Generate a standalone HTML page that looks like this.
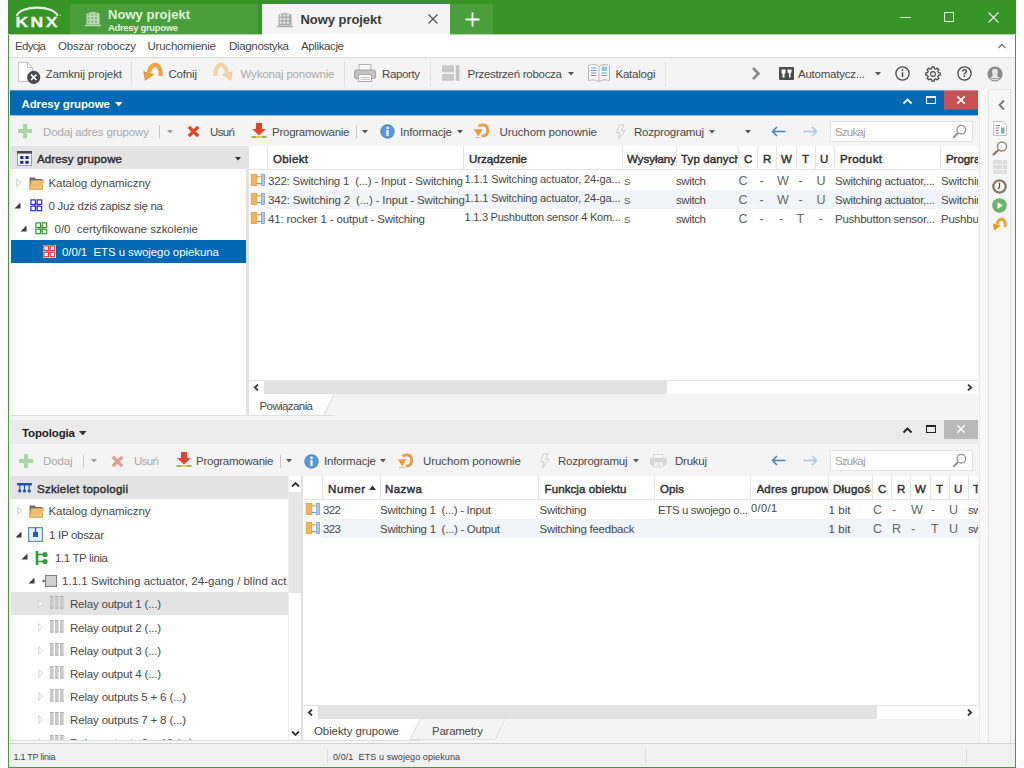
<!DOCTYPE html>
<html lang="pl"><head><meta charset="utf-8"><title>ETS5 - Nowy projekt</title>
<style>
html,body{margin:0;padding:0;}
body{width:1024px;height:768px;overflow:hidden;background:#fff;position:relative;font-family:"Liberation Sans",sans-serif;}
#app{position:absolute;left:0;top:0;width:1024px;height:768px;overflow:hidden;}
#app div,#app svg,#app span.t{position:absolute;}
#app span.t{white-space:pre;}
</style></head><body><div id="app">
<div style="left:8px;top:0px;width:1008px;height:768px;background:#f4f4f4;"></div>
<div style="left:8px;top:0px;width:1px;height:768px;background:#4a963d;"></div>
<div style="left:1015px;top:0px;width:1px;height:768px;background:#4a963d;"></div>
<div style="left:8px;top:767px;width:1008px;height:1px;background:#4a963d;"></div>
<div style="left:8px;top:0px;width:1008px;height:34px;background:#379426;"></div>
<div style="left:70px;top:4px;width:188px;height:30px;background:#4b9e3c;"></div>
<div style="left:262px;top:4px;width:188px;height:30px;background:#f4f4f4;"></div>
<div style="left:450px;top:4px;width:43px;height:30px;background:#4b9e3c;"></div>
<svg style="left:13px;top:4px;" width="52" height="26" viewBox="0 0 52 26"><path d="M3.8 11.8 C7 0.9 41 0.9 44.6 11.8" fill="none" stroke="#e4f6e0" stroke-width="2.1"/><text transform="translate(2.4 22.9) scale(1.17 1)" style="letter-spacing:2.1px" font-family="Liberation Sans,sans-serif" font-weight="700" font-size="15" fill="#effaec" stroke="#effaec" stroke-width="0.35">KNX</text><circle cx="47.3" cy="11" r="0.8" fill="#bfe3b8"/></svg>
<svg style="left:84.5px;top:11px;" width="16" height="16" viewBox="0 0 16 16"><g opacity="0.75"><path d="M1.5 2.5 Q8 -0.5 14.5 2.5 V13.5 H1.5Z" fill="#dff5da"/><rect x="2.6" y="2.4" width="2.2" height="2.2" fill="#000" opacity="0.25"/><rect x="2.6" y="6.0" width="2.2" height="2.2" fill="#000" opacity="0.25"/><rect x="2.6" y="9.6" width="2.2" height="2.2" fill="#000" opacity="0.25"/><rect x="6.2" y="2.4" width="2.2" height="2.2" fill="#000" opacity="0.25"/><rect x="6.2" y="6.0" width="2.2" height="2.2" fill="#000" opacity="0.25"/><rect x="6.2" y="9.6" width="2.2" height="2.2" fill="#000" opacity="0.25"/><rect x="9.8" y="2.4" width="2.2" height="2.2" fill="#000" opacity="0.25"/><rect x="9.8" y="6.0" width="2.2" height="2.2" fill="#000" opacity="0.25"/><rect x="9.8" y="9.6" width="2.2" height="2.2" fill="#000" opacity="0.25"/><path d="M0 14.5H16" stroke="#dff5da" stroke-width="1.4"/></g></svg>
<span class="t" style="left:108px;top:7.0px;font-size:13px;line-height:16px;color:#def6d8;font-weight:700;letter-spacing:0.034px;">Nowy projekt</span>
<span class="t" style="left:108px;top:22.5px;font-size:9.5px;line-height:10px;color:#def6d8;font-weight:700;letter-spacing:-0.341px;">Adresy grupowe</span>
<svg style="left:277px;top:12px;" width="16" height="16" viewBox="0 0 16 16"><g opacity="0.8"><path d="M1.5 2.5 Q8 -0.5 14.5 2.5 V13.5 H1.5Z" fill="#9a9a9a"/><rect x="2.6" y="2.4" width="2.2" height="2.2" fill="#fff" opacity="0.75"/><rect x="2.6" y="6.0" width="2.2" height="2.2" fill="#fff" opacity="0.75"/><rect x="2.6" y="9.6" width="2.2" height="2.2" fill="#fff" opacity="0.75"/><rect x="6.2" y="2.4" width="2.2" height="2.2" fill="#fff" opacity="0.75"/><rect x="6.2" y="6.0" width="2.2" height="2.2" fill="#fff" opacity="0.75"/><rect x="6.2" y="9.6" width="2.2" height="2.2" fill="#fff" opacity="0.75"/><rect x="9.8" y="2.4" width="2.2" height="2.2" fill="#fff" opacity="0.75"/><rect x="9.8" y="6.0" width="2.2" height="2.2" fill="#fff" opacity="0.75"/><rect x="9.8" y="9.6" width="2.2" height="2.2" fill="#fff" opacity="0.75"/><path d="M0 14.5H16" stroke="#9a9a9a" stroke-width="1.4"/></g></svg>
<span class="t" style="left:300.5px;top:11.5px;font-size:13px;line-height:16px;color:#3a3a3a;font-weight:700;letter-spacing:-0.057px;">Nowy projekt</span>
<svg style="left:427px;top:13px;" width="12" height="12" viewBox="0 0 12 12"><path d="M1.5 1.5L10.5 10.5M10.5 1.5L1.5 10.5" stroke="#555" stroke-width="1.3" fill="none"/></svg>
<svg style="left:464px;top:11px;" width="17" height="17" viewBox="0 0 17 17"><path d="M8.5 1.5V15.5M1.5 8.5H15.5" stroke="#fff" stroke-width="1.8" fill="none"/></svg>
<div style="left:900px;top:17px;width:11px;height:1px;background:#d7ecd3;"></div>
<div style="left:944px;top:12px;width:10px;height:10px;border:1px solid #e4f2e1;box-sizing:border-box;"></div>
<svg style="left:988px;top:12px;" width="11" height="11" viewBox="0 0 11 11"><path d="M0.5 0.5L10.5 10.5M10.5 0.5L0.5 10.5" stroke="#e4f2e1" stroke-width="1.1" fill="none"/></svg>
<div style="left:9px;top:34px;width:1006px;height:23px;background:#fff;"></div>
<div style="left:8px;top:34px;width:254px;height:1px;background:#b3d6ac;"></div>
<div style="left:450px;top:34px;width:566px;height:1px;background:#b3d6ac;"></div>
<span class="t" style="left:15px;top:38.0px;font-size:11.5px;line-height:16px;color:#484848;letter-spacing:-0.706px;">Edycja</span>
<span class="t" style="left:58px;top:38.0px;font-size:11.5px;line-height:16px;color:#484848;letter-spacing:-0.195px;">Obszar roboczy</span>
<span class="t" style="left:147.5px;top:38.0px;font-size:11.5px;line-height:16px;color:#484848;letter-spacing:-0.223px;">Uruchomienie</span>
<span class="t" style="left:229px;top:38.0px;font-size:11.5px;line-height:16px;color:#484848;letter-spacing:-0.330px;">Diagnostyka</span>
<span class="t" style="left:301px;top:38.0px;font-size:11.5px;line-height:16px;color:#484848;letter-spacing:-0.379px;">Aplikacje</span>
<svg style="left:997px;top:42px;" width="10" height="8" viewBox="0 0 10 8"><path d="M1.5 6L5 2.5L8.5 6" stroke="#777" stroke-width="1.4" fill="none"/></svg>
<div style="left:9px;top:57px;width:1006px;height:1px;background:#dadada;"></div>
<div style="left:9px;top:58px;width:1006px;height:32px;background:#f4f4f4;"></div>
<div style="left:10px;top:88px;width:968px;height:2px;background:#e6f1f9;"></div>
<svg style="left:16px;top:61px;" width="26" height="25" viewBox="0 0 26 25"><path d="M2.5 1.5H11.5L16.5 6.5V20.5H2.5Z" fill="#fff" stroke="#c4c4c4"/><path d="M11.5 1.5V6.5H16.5" fill="none" stroke="#c4c4c4"/><circle cx="17.7" cy="16.3" r="6.6" fill="#4a4a4a"/><path d="M15 13.6L20.4 19M20.4 13.6L15 19" stroke="#fff" stroke-width="1.7"/></svg>
<span class="t" style="left:45.5px;top:66.0px;font-size:11.5px;line-height:16px;color:#484848;letter-spacing:-0.105px;">Zamknij projekt</span>
<div style="left:131px;top:62px;width:1px;height:25px;background:#e0e0e0;"></div>
<svg style="left:142px;top:62px;" width="21" height="20" viewBox="0 0 21 20"><g opacity="1.0"><path d="M18.3 14 C19.8 6.5 15.5 1.8 11.5 3.3 C8.8 4.4 7.6 7 7 10.5" fill="none" stroke="#f0a23c" stroke-width="4.2"/><path d="M1.3 9.2 L12.2 12.2 L3 18.8 Z" fill="#e08a1c"/><path d="M2.5 10.5 L10 12.5 L3.8 17 Z" fill="#f0a23c"/></g></svg>
<span class="t" style="left:168.5px;top:66.0px;font-size:11.5px;line-height:16px;color:#484848;letter-spacing:-0.181px;">Cofnij</span>
<svg style="left:213px;top:62px;" width="21" height="20" viewBox="0 0 21 20"><g transform="translate(21 0) scale(-1 1)" opacity="0.4"><path d="M18.3 14 C19.8 6.5 15.5 1.8 11.5 3.3 C8.8 4.4 7.6 7 7 10.5" fill="none" stroke="#f0a23c" stroke-width="4.2"/><path d="M1.3 9.2 L12.2 12.2 L3 18.8 Z" fill="#e08a1c"/><path d="M2.5 10.5 L10 12.5 L3.8 17 Z" fill="#f0a23c"/></g></svg>
<span class="t" style="left:240.5px;top:66.0px;font-size:11.5px;line-height:16px;color:#a9a9a9;letter-spacing:-0.163px;">Wykonaj ponownie</span>
<div style="left:344px;top:62px;width:1px;height:25px;background:#e0e0e0;"></div>
<svg style="left:354px;top:63.5px;" width="22" height="18.0" viewBox="0 0 22 18"><g opacity="1.0"><rect x="5" y="0.5" width="12" height="6" fill="#f8f8f8" stroke="#b4b4b4"/><rect x="0.5" y="6" width="21" height="8.5" rx="1.5" fill="#c2c2c2" stroke="#a4a4a4"/><rect x="4.5" y="10.5" width="13" height="7" fill="#fafafa" stroke="#adadad"/><path d="M6.5 13.5H15.5M6.5 15.5H15.5" stroke="#c4c4c4"/></g></svg>
<span class="t" style="left:382px;top:66.0px;font-size:11.5px;line-height:16px;color:#484848;letter-spacing:-0.380px;">Raporty</span>
<div style="left:430px;top:62px;width:1px;height:25px;background:#e0e0e0;"></div>
<svg style="left:442px;top:65px;" width="18" height="16" viewBox="0 0 18 16"><rect x="0" y="0.3" width="12" height="7" fill="#c9c9c9"/><rect x="0" y="9" width="12" height="6.8" fill="#c9c9c9"/><rect x="13.8" y="0.3" width="3.7" height="15.5" fill="#c4c4c4"/></svg>
<span class="t" style="left:467.5px;top:66.0px;font-size:11.5px;line-height:16px;color:#484848;letter-spacing:-0.269px;">Przestrzeń robocza</span>
<svg style="left:567.5px;top:72px;" width="6" height="4.0" viewBox="0 0 6 4.0"><path d="M0 0H6L3.0 3.6Z" fill="#555"/></svg>
<svg style="left:587px;top:62px;" width="24" height="21" viewBox="0 0 24 21"><path d="M1.5 3.5C5 2 9 2 12 4.5C15 2 19 2 22.5 3.5V18.5C19 17.5 15 17.5 12 19.5C9 17.5 5 17.5 1.5 18.5Z" fill="#fbfbfb" stroke="#b5b5b5"/><path d="M12 4.5V19.5" stroke="#b5b5b5"/><path d="M4 6H9.5M4 8.5H9.5M4 11H9.5M4 13.5H9.5M14.5 11H20M14.5 13.5H20" stroke="#4aa3dc" stroke-width="1.2"/><rect x="14.5" y="4.5" width="5.5" height="4.5" fill="#8fc8ee"/></svg>
<span class="t" style="left:615.5px;top:66.0px;font-size:11.5px;line-height:16px;color:#484848;letter-spacing:-0.223px;">Katalogi</span>
<div style="left:665px;top:62px;width:1px;height:25px;background:#e0e0e0;"></div>
<svg style="left:750px;top:66px;" width="11" height="15" viewBox="0 0 11 15"><path d="M3 2L8.5 7.5L3 13" stroke="#8a8a8a" stroke-width="2.6" fill="none"/></svg>
<svg style="left:779px;top:67px;" width="15" height="13" viewBox="0 0 15 13"><rect x="0" y="0" width="15" height="13" rx="1" fill="#4d4d4d"/><path d="M2.5 2.5H6.5V6L5.5 7V10.5H3.5V7L2.5 6Z M8.5 2.5H12.5V5.5L11.5 6.5V10.5H10V6.5L8.5 5.5Z" fill="#fff"/></svg>
<span class="t" style="left:798px;top:66.0px;font-size:11.5px;line-height:16px;color:#484848;letter-spacing:-0.223px;">Automatycz...</span>
<svg style="left:875.0px;top:72px;" width="6" height="4.0" viewBox="0 0 6 4.0"><path d="M0 0H6L3.0 3.6Z" fill="#555"/></svg>
<svg style="left:893.5px;top:65px;" width="17" height="17" viewBox="0 0 17 17"><circle cx="8.5" cy="8.5" r="6.6" fill="none" stroke="#4a4a4a" stroke-width="1.3"/><path d="M8.5 7.3V12.2" stroke="#4a4a4a" stroke-width="1.5"/><circle cx="8.5" cy="5" r="0.95" fill="#4a4a4a"/></svg>
<svg style="left:924px;top:64.5px;" width="18" height="18" viewBox="0 0 18 18"><path d="M14.42 7.61L16.21 7.86L16.21 10.14L14.42 10.39L13.82 11.85L14.91 13.29L13.29 14.91L11.85 13.82L10.39 14.42L10.14 16.21L7.86 16.21L7.61 14.42L6.15 13.82L4.71 14.91L3.09 13.29L4.18 11.85L3.58 10.39L1.79 10.14L1.79 7.86L3.58 7.61L4.18 6.15L3.09 4.71L4.71 3.09L6.15 4.18L7.61 3.58L7.86 1.79L10.14 1.79L10.39 3.58L11.85 4.18L13.29 3.09L14.91 4.71L13.82 6.15Z" fill="none" stroke="#4a4a4a" stroke-width="1.3" stroke-linejoin="round"/><circle cx="9" cy="9" r="2.4" fill="none" stroke="#4a4a4a" stroke-width="1.1"/></svg>
<svg style="left:955.5px;top:65px;" width="17" height="17" viewBox="0 0 17 17"><circle cx="8.5" cy="8.5" r="6.6" fill="none" stroke="#4a4a4a" stroke-width="1.3"/><text x="8.5" y="12.2" font-family="Liberation Sans,sans-serif" font-weight="700" font-size="10.5" text-anchor="middle" fill="#4a4a4a">?</text></svg>
<svg style="left:986px;top:64.5px;" width="18" height="18" viewBox="0 0 18 18"><circle cx="9" cy="9" r="7.6" fill="#8b8b8b"/><circle cx="9" cy="6.8" r="3" fill="#e6e6e6"/><path d="M6.8 9H11.2L11.8 11.5L14.5 13.2C13 15.8 5 15.8 3.5 13.2L6.2 11.5Z" fill="#e6e6e6"/><path d="M4.5 13.6H13.5" stroke="#8b8b8b" stroke-width="0.8"/></svg>
<div style="left:979px;top:90px;width:1px;height:653px;background:#ebebeb;"></div>
<div style="left:980px;top:90px;width:8px;height:653px;background:#f8f8f8;"></div>
<div style="left:988px;top:89px;width:23px;height:654px;background:#f6f6f6;border:1px solid #e4e4e4;border-bottom:0;box-sizing:border-box;"></div>
<svg style="left:997px;top:99px;" width="9" height="12" viewBox="0 0 9 12"><path d="M7 1.5L2.5 6L7 10.5" stroke="#777" stroke-width="1.8" fill="none"/></svg>
<svg style="left:993px;top:121px;" width="14" height="15" viewBox="0 0 14 15"><path d="M0.5 0.5H9.5L13.5 4.5V14.5H0.5Z" fill="#fdfdfd" stroke="#c2c2c2"/><path d="M2.5 4.5H7M2.5 7H6M2.5 9.5H6M2.5 12H6" stroke="#888"/><rect x="8" y="6.5" width="3.5" height="6" fill="#7db4a8"/></svg>
<svg style="left:992px;top:141px;" width="16" height="15" viewBox="0 0 16 15"><circle cx="10" cy="5.5" r="4.5" fill="#fbfbfb" stroke="#9a8572" stroke-width="1.4"/><path d="M6.5 9L1 14" stroke="#8f7560" stroke-width="2.2"/></svg>
<svg style="left:993px;top:160px;" width="14" height="14" viewBox="0 0 14 14"><rect x="0" y="0" width="14" height="14" fill="#dedede"/><path d="M0 4.5H14M0 9.5H14M9.5 0V14" stroke="#efefef"/></svg>
<svg style="left:992px;top:179px;" width="15" height="15" viewBox="0 0 15 15"><circle cx="7.5" cy="7.5" r="6.3" fill="#fbf9f6" stroke="#8a7566" stroke-width="1.6"/><path d="M7.5 3.5V8L5.5 10" stroke="#6d5a4c" stroke-width="1.2" fill="none"/></svg>
<svg style="left:992px;top:198px;" width="15" height="15" viewBox="0 0 15 15"><circle cx="7.5" cy="7.5" r="7.3" fill="#6cb56a"/><path d="M5.5 4L11 7.5L5.5 11Z" fill="#fff"/></svg>
<svg style="left:992px;top:216.5px;" width="15" height="14.3" viewBox="0 0 21 20"><path d="M18.3 14 C19.8 6.5 15.5 1.8 11.5 3.3 C8.8 4.4 7.6 7 7 10.5" fill="none" stroke="#f0a23c" stroke-width="4.4"/><path d="M1.3 9.2 L12.2 12.2 L3 18.8 Z" fill="#e8921f"/></svg>
<svg style="left:992px;top:179px;" width="15" height="15" viewBox="0 0 15 15"><circle cx="7.5" cy="7.5" r="6.1" fill="#fbf6ef" stroke="#8a7364" stroke-width="2"/><path d="M7.5 3.8V8L6 10.2" stroke="#5d4a3e" stroke-width="1.2" fill="none"/></svg>
<div style="left:10px;top:90px;width:968px;height:26px;background:#0069b4;"></div>
<div style="left:10px;top:90px;width:968px;height:1px;background:#5a9ccc;"></div>
<div style="left:10px;top:115px;width:968px;height:1px;background:#9cc2dd;"></div>
<span class="t" style="left:21.5px;top:95.5px;font-size:11.5px;line-height:16px;color:#fff;font-weight:700;letter-spacing:-0.124px;">Adresy grupowe</span>
<svg style="left:114.75px;top:101.5px;" width="7.5" height="4.9" viewBox="0 0 7.5 4.9"><path d="M0 0H7.5L3.75 4.5Z" fill="#fff"/></svg>
<svg style="left:901.5px;top:96.5px;" width="11" height="8" viewBox="0 0 11 8"><path d="M1.5 6.5L5.5 2.5L9.5 6.5" stroke="#fff" stroke-width="1.8" fill="none"/></svg>
<div style="left:926px;top:96px;width:10px;height:8px;border:1px solid #fff;border-top-width:2px;box-sizing:border-box;"></div>
<div style="left:944px;top:90px;width:34px;height:20px;background:#c75050;"></div>
<div style="left:944px;top:90px;width:34px;height:1px;background:#d88a8a;"></div>
<div style="left:944px;top:109px;width:34px;height:1px;background:#6a5c80;"></div>
<svg style="left:956px;top:94.5px;" width="10" height="10" viewBox="0 0 10 10"><path d="M1.3 1.3L8.7 8.7M8.7 1.3L1.3 8.7" stroke="#fff" stroke-width="1.7" fill="none"/></svg>
<div style="left:10px;top:116px;width:968px;height:30px;background:#f4f4f4;"></div>
<svg style="left:18px;top:124px;" width="14" height="14" viewBox="0 0 14 14"><path d="M5 0H9V5H14V9H9V14H5V9H0V5H5Z" fill="#7cc06a" opacity="0.6"/></svg>
<span class="t" style="left:43px;top:123.5px;font-size:11.5px;line-height:16px;color:#a9a9a9;letter-spacing:-0.148px;">Dodaj adres grupowy</span>
<div style="left:159px;top:125px;width:1px;height:13px;background:#c8c8c8;"></div>
<svg style="left:167.0px;top:129.5px;" width="6" height="4.0" viewBox="0 0 6 4.0"><path d="M0 0H6L3.0 3.6Z" fill="#a0a0a0"/></svg>
<svg style="left:187px;top:125px;" width="13" height="13" viewBox="0 0 13 13"><path d="M1.8 1.8L11.2 11.2M11.2 1.8L1.8 11.2" stroke="#dd4424" stroke-width="3.3" opacity="1.0"/></svg>
<span class="t" style="left:210px;top:123.5px;font-size:11.5px;line-height:16px;color:#484848;letter-spacing:-0.620px;">Usuń</span>
<svg style="left:251px;top:123px;" width="16" height="16" viewBox="0 0 16 16"><path d="M5 0H11V6H15L8 12.5L1 6H5Z" fill="#e5452c"/><rect x="0.5" y="13" width="15" height="2" fill="#8cc152"/><rect x="5" y="13" width="6" height="2" fill="#f4c842"/></svg>
<span class="t" style="left:272px;top:123.5px;font-size:11.5px;line-height:16px;color:#484848;letter-spacing:-0.254px;">Programowanie</span>
<div style="left:356px;top:125px;width:1px;height:13px;background:#c8c8c8;"></div>
<svg style="left:362.0px;top:129.5px;" width="6" height="4.0" viewBox="0 0 6 4.0"><path d="M0 0H6L3.0 3.6Z" fill="#555"/></svg>
<svg style="left:380px;top:124px;" width="15" height="15" viewBox="0 0 15 15"><circle cx="7.5" cy="7.5" r="7.2" fill="#4a8bcb"/><circle cx="7.5" cy="7.5" r="6" fill="#5b9ad6"/><rect x="6.4" y="6.2" width="2.2" height="5.6" fill="#fff"/><circle cx="7.5" cy="3.9" r="1.3" fill="#fff"/></svg>
<span class="t" style="left:400px;top:123.5px;font-size:11.5px;line-height:16px;color:#484848;letter-spacing:-0.188px;">Informacje</span>
<svg style="left:456.5px;top:129.5px;" width="6" height="4.0" viewBox="0 0 6 4.0"><path d="M0 0H6L3.0 3.6Z" fill="#555"/></svg>
<svg style="left:473px;top:123px;" width="17" height="16" viewBox="0 0 17 16"><path d="M5.6 3.4 C7.5 1.4 13.6 1 14.4 5.2 C15.1 9.2 14.8 13.2 8.6 13.1" fill="none" stroke="#e0a24e" stroke-width="2.9"/><path d="M0.8 6.2 H9.6 L5.2 13.2 Z" fill="#ec9a3c"/><path d="M2 14.6 H7.5" stroke="#cdbfa8" stroke-width="1"/></svg>
<span class="t" style="left:499.5px;top:123.5px;font-size:11.5px;line-height:16px;color:#484848;letter-spacing:-0.106px;">Uruchom ponownie</span>
<svg style="left:615px;top:123.5px;" width="11" height="16" viewBox="0 0 11 16"><path d="M4.5 0.8H9L6.3 6.3H10L3.5 15.2L5 8.8H1.5Z" fill="#f6f6f6" stroke="#c9c9c9" stroke-width="0.9"/></svg>
<span class="t" style="left:634px;top:123.5px;font-size:11.5px;line-height:16px;color:#484848;letter-spacing:-0.203px;">Rozprogramuj</span>
<svg style="left:708.5px;top:129.5px;" width="6" height="4.0" viewBox="0 0 6 4.0"><path d="M0 0H6L3.0 3.6Z" fill="#555"/></svg>
<svg style="left:745.0px;top:129.5px;" width="6" height="4.0" viewBox="0 0 6 4.0"><path d="M0 0H6L3.0 3.6Z" fill="#555"/></svg>
<svg style="left:771px;top:126px;" width="15" height="11" viewBox="0 0 15 11"><path d="M6 1L1.5 5.5L6 10M1.5 5.5H14.5" stroke="#4a7fc0" stroke-width="1.5" fill="none"/></svg>
<svg style="left:803px;top:126px;" width="15" height="11" viewBox="0 0 15 11"><path d="M9 1L13.5 5.5L9 10M13.5 5.5H0.5" stroke="#a9c4e4" stroke-width="1.5" fill="none"/></svg>
<div style="left:830px;top:121px;width:143px;height:21px;background:#fff;border:1px solid #e4e4e4;box-sizing:border-box;"></div>
<span class="t" style="left:835px;top:123.5px;font-size:11.5px;line-height:16px;color:#a0a0a0;letter-spacing:-0.806px;">Szukaj</span>
<svg style="left:952px;top:124px;" width="15" height="15" viewBox="0 0 15 15"><circle cx="9.3" cy="5.7" r="4.3" fill="none" stroke="#8e8e8e" stroke-width="1.3"/><path d="M6 9L1.2 13.8" stroke="#8e8e8e" stroke-width="1.9"/></svg>
<div style="left:10px;top:146px;width:236px;height:269px;background:#fff;"></div>
<div style="left:10px;top:146px;width:236px;height:23px;background:#e3e3e3;"></div>
<svg style="left:17px;top:151px;" width="15" height="15" viewBox="0 0 15 15"><rect x="0.5" y="0.5" width="14" height="14" fill="#f4f6ff" stroke="#8f9fce"/><rect x="0" y="0" width="15" height="2.6" fill="#4a4a4a"/><rect x="3.2" y="5" width="3.2" height="3" fill="#1c1cd2"/><rect x="8.4" y="5" width="3.2" height="3" fill="#1c1cd2"/><rect x="3.2" y="9.8" width="3.2" height="3" fill="#1c1cd2"/><rect x="8.4" y="9.8" width="3.2" height="3" fill="#1c1cd2"/></svg>
<span class="t" style="left:37px;top:150.5px;font-size:11.5px;line-height:16px;color:#303030;letter-spacing:0.145px;-webkit-text-stroke:0.45px #303030;">Adresy grupowe</span>
<svg style="left:235.0px;top:156.5px;" width="6" height="4.0" viewBox="0 0 6 4.0"><path d="M0 0H6L3.0 3.6Z" fill="#333"/></svg>
<svg style="left:16px;top:177.5px;" width="6" height="9" viewBox="0 0 6 9"><path d="M0.8 0.8L4.8 4.5L0.8 8.2Z" fill="#fff" stroke="#c4c4c4" stroke-width="0.9"/></svg>
<svg style="left:29px;top:176px;" width="15" height="14" viewBox="0 0 15 14"><path d="M0.5 1.5H5.5L7 3H13.5V13H0.5Z" fill="#6e6e6e"/><path d="M2.2 4.5H14.7L13.2 13.5H0.5Z" fill="#f2bd6c" stroke="#d9a04a" stroke-width="0.6"/></svg>
<span class="t" style="left:48.5px;top:175.0px;font-size:11.5px;line-height:16px;color:#484848;letter-spacing:-0.054px;">Katalog dynamiczny</span>
<svg style="left:14px;top:201.5px;" width="7" height="7" viewBox="0 0 7 7"><path d="M6.5 0.5V6.5H0.5Z" fill="#3a3a3a"/></svg>
<svg style="left:29.5px;top:198.7px;" width="13" height="13" viewBox="0 0 13 13"><path d="M6.3 3V10M3 6.3H10" stroke="#b8b8b8" stroke-width="1.3"/><g fill="#fff" stroke="#2222cc" stroke-width="1.15"><rect x="0.9" y="0.9" width="4.5" height="4.5"/><rect x="7.2" y="0.9" width="4.5" height="4.5"/><rect x="0.9" y="7.2" width="4.5" height="4.5"/><rect x="7.2" y="7.2" width="4.5" height="4.5"/></g></svg>
<span class="t" style="left:48.5px;top:198.0px;font-size:11.5px;line-height:16px;color:#484848;letter-spacing:-0.274px;">0 Już dziś zapisz się na</span>
<svg style="left:20px;top:224.5px;" width="7" height="7" viewBox="0 0 7 7"><path d="M6.5 0.5V6.5H0.5Z" fill="#3a3a3a"/></svg>
<svg style="left:35.3px;top:221.7px;" width="13" height="13" viewBox="0 0 13 13"><path d="M6.3 3V10M3 6.3H10" stroke="#b8b8b8" stroke-width="1.3"/><g fill="#fff" stroke="#2f8f2f" stroke-width="1.15"><rect x="0.9" y="0.9" width="4.5" height="4.5"/><rect x="7.2" y="0.9" width="4.5" height="4.5"/><rect x="0.9" y="7.2" width="4.5" height="4.5"/><rect x="7.2" y="7.2" width="4.5" height="4.5"/></g></svg>
<span class="t" style="left:54.5px;top:221.0px;font-size:11.5px;line-height:16px;color:#484848;letter-spacing:-0.012px;">0/0  certyfikowane szkolenie</span>
<div style="left:11px;top:240px;width:235px;height:23px;background:#0069b4;"></div>
<div style="left:43px;top:244.5px;width:13px;height:13px;background:#fbe6e6;"></div>
<svg style="left:42.7px;top:244.5px;" width="13" height="13" viewBox="0 0 13 13"><path d="M6.3 3V10M3 6.3H10" stroke="#b8b8b8" stroke-width="1.3"/><g fill="#fff" stroke="#e03434" stroke-width="1.15"><rect x="0.9" y="0.9" width="4.5" height="4.5"/><rect x="7.2" y="0.9" width="4.5" height="4.5"/><rect x="0.9" y="7.2" width="4.5" height="4.5"/><rect x="7.2" y="7.2" width="4.5" height="4.5"/></g></svg>
<span class="t" style="left:62px;top:243.5px;font-size:11.5px;line-height:16px;color:#fff;letter-spacing:-0.078px;">0/0/1  ETS u swojego opiekuna</span>
<div style="left:246px;top:146px;width:3px;height:270px;background:#e3e3e3;"></div>
<div style="left:249px;top:146px;width:729px;height:234px;background:#fff;"></div>
<div style="left:249px;top:169px;width:729px;height:1px;background:#e4e4e4;"></div>
<div style="left:267px;top:146px;width:1px;height:23px;background:#e4e4e4;"></div>
<div style="left:463px;top:146px;width:1px;height:23px;background:#e4e4e4;"></div>
<div style="left:622px;top:146px;width:1px;height:23px;background:#e4e4e4;"></div>
<div style="left:676px;top:146px;width:1px;height:23px;background:#e4e4e4;"></div>
<div style="left:738px;top:146px;width:1px;height:23px;background:#e4e4e4;"></div>
<div style="left:757px;top:146px;width:1px;height:23px;background:#e4e4e4;"></div>
<div style="left:776px;top:146px;width:1px;height:23px;background:#e4e4e4;"></div>
<div style="left:796px;top:146px;width:1px;height:23px;background:#e4e4e4;"></div>
<div style="left:815px;top:146px;width:1px;height:23px;background:#e4e4e4;"></div>
<div style="left:834px;top:146px;width:1px;height:23px;background:#e4e4e4;"></div>
<div style="left:940px;top:146px;width:1px;height:23px;background:#e4e4e4;"></div>
<span class="t" style="left:273px;top:150.5px;font-size:11.5px;line-height:16px;color:#303030;letter-spacing:0.350px;-webkit-text-stroke:0.45px #303030;">Obiekt</span>
<span class="t" style="left:469px;top:150.5px;font-size:11.5px;line-height:16px;color:#303030;letter-spacing:-0.019px;-webkit-text-stroke:0.45px #303030;">Urządzenie</span>
<span class="t" style="left:627px;top:150.5px;font-size:11.5px;line-height:16px;color:#303030;letter-spacing:-0.016px;-webkit-text-stroke:0.45px #303030;width:49px;overflow:hidden;">Wysyłany</span>
<span class="t" style="left:681px;top:150.5px;font-size:11.5px;line-height:16px;color:#303030;letter-spacing:0.130px;-webkit-text-stroke:0.45px #303030;width:57px;overflow:hidden;">Typ danych</span>
<span class="t" style="left:744px;top:150.5px;font-size:11.5px;line-height:16px;color:#303030;-webkit-text-stroke:0.45px #303030;">C</span>
<span class="t" style="left:763px;top:150.5px;font-size:11.5px;line-height:16px;color:#303030;-webkit-text-stroke:0.45px #303030;">R</span>
<span class="t" style="left:781px;top:150.5px;font-size:11.5px;line-height:16px;color:#303030;-webkit-text-stroke:0.45px #303030;">W</span>
<span class="t" style="left:802px;top:150.5px;font-size:11.5px;line-height:16px;color:#303030;-webkit-text-stroke:0.45px #303030;">T</span>
<span class="t" style="left:820px;top:150.5px;font-size:11.5px;line-height:16px;color:#303030;-webkit-text-stroke:0.45px #303030;">U</span>
<span class="t" style="left:840px;top:150.5px;font-size:11.5px;line-height:16px;color:#303030;letter-spacing:0.393px;-webkit-text-stroke:0.45px #303030;">Produkt</span>
<span class="t" style="left:946px;top:150.5px;font-size:11.5px;line-height:16px;color:#303030;letter-spacing:-0.046px;-webkit-text-stroke:0.45px #303030;width:32px;overflow:hidden;">Programowanie</span>
<div style="left:267px;top:190px;width:711px;height:19px;background:#f1f4f8;"></div>
<svg style="left:250px;top:174.4px;" width="16" height="12" viewBox="0 0 16 12"><rect x="1.2" y="0.4" width="5.6" height="11.2" fill="#f1b455" stroke="#e3a040" stroke-width="0.8"/><path d="M7 2.8H11.5" stroke="#e9a648" stroke-width="1.3"/><path d="M7 9.6H11.5" stroke="#6f9fd8" stroke-width="1.3"/><rect x="11.4" y="0.5" width="3.2" height="11" fill="#a9c8ec" stroke="#7aa5da" stroke-width="0.8"/></svg>
<span class="t" style="left:268px;top:173.0px;font-size:11.5px;line-height:16px;color:#484848;letter-spacing:-0.197px;">322: Switching 1  (...) - Input - Switching</span>
<span class="t" style="left:464.5px;top:171.0px;font-size:11px;line-height:16px;color:#484848;letter-spacing:-0.128px;">1.1.1 Switching actuator, 24-ga...</span>
<span class="t" style="left:624px;top:173.5px;font-size:9.5px;line-height:16px;color:#555;">S</span>
<span class="t" style="left:676px;top:173.0px;font-size:11.5px;line-height:16px;color:#484848;letter-spacing:-0.391px;">switch</span>
<span class="t" style="left:738.5px;top:173.0px;font-size:12.5px;line-height:16px;color:#666;">C</span>
<span class="t" style="left:759.5px;top:173.0px;font-size:12.5px;line-height:16px;color:#666;">-</span>
<span class="t" style="left:777px;top:173.0px;font-size:12.5px;line-height:16px;color:#666;">W</span>
<span class="t" style="left:798.5px;top:173.0px;font-size:12.5px;line-height:16px;color:#666;">-</span>
<span class="t" style="left:816.5px;top:173.0px;font-size:12.5px;line-height:16px;color:#666;">U</span>
<span class="t" style="left:835px;top:173.0px;font-size:11.5px;line-height:16px;color:#484848;letter-spacing:-0.292px;">Switching actuator,...</span>
<span class="t" style="left:941px;top:173.0px;font-size:11.5px;line-height:16px;color:#484848;letter-spacing:-0.152px;width:37px;overflow:hidden;">Switching</span>
<svg style="left:250px;top:193.4px;" width="16" height="12" viewBox="0 0 16 12"><rect x="1.2" y="0.4" width="5.6" height="11.2" fill="#f1b455" stroke="#e3a040" stroke-width="0.8"/><path d="M7 2.8H11.5" stroke="#e9a648" stroke-width="1.3"/><path d="M7 9.6H11.5" stroke="#6f9fd8" stroke-width="1.3"/><rect x="11.4" y="0.5" width="3.2" height="11" fill="#a9c8ec" stroke="#7aa5da" stroke-width="0.8"/></svg>
<span class="t" style="left:268px;top:192.0px;font-size:11.5px;line-height:16px;color:#484848;letter-spacing:-0.149px;">342: Switching 2  (...) - Input - Switching</span>
<span class="t" style="left:464.5px;top:190.0px;font-size:11px;line-height:16px;color:#484848;letter-spacing:-0.128px;">1.1.1 Switching actuator, 24-ga...</span>
<span class="t" style="left:624px;top:192.5px;font-size:9.5px;line-height:16px;color:#555;">S</span>
<span class="t" style="left:676px;top:192.0px;font-size:11.5px;line-height:16px;color:#484848;letter-spacing:-0.391px;">switch</span>
<span class="t" style="left:738.5px;top:192.0px;font-size:12.5px;line-height:16px;color:#666;">C</span>
<span class="t" style="left:759.5px;top:192.0px;font-size:12.5px;line-height:16px;color:#666;">-</span>
<span class="t" style="left:777px;top:192.0px;font-size:12.5px;line-height:16px;color:#666;">W</span>
<span class="t" style="left:798.5px;top:192.0px;font-size:12.5px;line-height:16px;color:#666;">-</span>
<span class="t" style="left:816.5px;top:192.0px;font-size:12.5px;line-height:16px;color:#666;">U</span>
<span class="t" style="left:835px;top:192.0px;font-size:11.5px;line-height:16px;color:#484848;letter-spacing:-0.292px;">Switching actuator,...</span>
<span class="t" style="left:941px;top:192.0px;font-size:11.5px;line-height:16px;color:#484848;letter-spacing:-0.152px;width:37px;overflow:hidden;">Switching</span>
<svg style="left:250px;top:212.4px;" width="16" height="12" viewBox="0 0 16 12"><rect x="1.2" y="0.4" width="5.6" height="11.2" fill="#f1b455" stroke="#e3a040" stroke-width="0.8"/><path d="M7 2.8H11.5" stroke="#e9a648" stroke-width="1.3"/><path d="M7 9.6H11.5" stroke="#6f9fd8" stroke-width="1.3"/><rect x="11.4" y="0.5" width="3.2" height="11" fill="#a9c8ec" stroke="#7aa5da" stroke-width="0.8"/></svg>
<span class="t" style="left:268px;top:211.0px;font-size:11.5px;line-height:16px;color:#484848;letter-spacing:-0.167px;">41: rocker 1 - output - Switching</span>
<span class="t" style="left:464.5px;top:209.0px;font-size:11px;line-height:16px;color:#484848;letter-spacing:-0.234px;">1.1.3 Pushbutton sensor 4 Kom...</span>
<span class="t" style="left:624px;top:211.5px;font-size:9.5px;line-height:16px;color:#555;">S</span>
<span class="t" style="left:676px;top:211.0px;font-size:11.5px;line-height:16px;color:#484848;letter-spacing:-0.391px;">switch</span>
<span class="t" style="left:738.5px;top:211.0px;font-size:12.5px;line-height:16px;color:#666;">C</span>
<span class="t" style="left:759.5px;top:211.0px;font-size:12.5px;line-height:16px;color:#666;">-</span>
<span class="t" style="left:779px;top:211.0px;font-size:12.5px;line-height:16px;color:#666;">-</span>
<span class="t" style="left:796.5px;top:211.0px;font-size:12.5px;line-height:16px;color:#666;">T</span>
<span class="t" style="left:818.5px;top:211.0px;font-size:12.5px;line-height:16px;color:#666;">-</span>
<span class="t" style="left:835px;top:211.0px;font-size:11.5px;line-height:16px;color:#484848;letter-spacing:-0.256px;">Pushbutton sensor...</span>
<span class="t" style="left:941px;top:211.0px;font-size:11.5px;line-height:16px;color:#484848;letter-spacing:-0.243px;width:37px;overflow:hidden;">Pushbutton</span>
<div style="left:249px;top:380px;width:729px;height:14px;background:#fff;"></div>
<div style="left:249px;top:380px;width:729px;height:1px;background:#e4e4e4;"></div>
<div style="left:264px;top:381px;width:403px;height:13px;background:#e2e2e2;"></div>
<svg style="left:253px;top:384px;" width="7" height="7" viewBox="0 0 7 7"><path d="M5 0.6L1.8 3.5L5 6.4" stroke="#3a3a3a" stroke-width="1.9" fill="none"/></svg>
<svg style="left:966px;top:384px;" width="7" height="7" viewBox="0 0 7 7"><path d="M2 0.6L5.2 3.5L2 6.4" stroke="#3a3a3a" stroke-width="1.9" fill="none"/></svg>
<svg style="left:249px;top:394px" width="87" height="21" viewBox="0 0 87 21"><path d="M0 0H85L75 21H0Z" fill="#fff"/><path d="M85 0L75 21" stroke="#dedede" fill="none"/></svg>
<span class="t" style="left:259.5px;top:398.0px;font-size:11.5px;line-height:16px;color:#484848;letter-spacing:-0.592px;">Powiązania</span>
<div style="left:10px;top:415px;width:324px;height:1px;background:#dedede;"></div>
<div style="left:10px;top:420px;width:968px;height:24px;background:#ebebeb;"></div>
<span class="t" style="left:22px;top:424.5px;font-size:11.5px;line-height:16px;color:#222;font-weight:700;letter-spacing:-0.137px;">Topologia</span>
<svg style="left:79.25px;top:430.5px;" width="7.5" height="4.9" viewBox="0 0 7.5 4.9"><path d="M0 0H7.5L3.75 4.5Z" fill="#333"/></svg>
<svg style="left:901.5px;top:425.5px;" width="11" height="8" viewBox="0 0 11 8"><path d="M1.5 6.5L5.5 2.5L9.5 6.5" stroke="#222" stroke-width="1.8" fill="none"/></svg>
<div style="left:926px;top:425px;width:10px;height:8px;border:1px solid #222;border-top-width:2px;box-sizing:border-box;"></div>
<div style="left:944px;top:420px;width:34px;height:19px;background:#b9b9b9;"></div>
<svg style="left:956px;top:424px;" width="10" height="10" viewBox="0 0 10 10"><path d="M1.3 1.3L8.7 8.7M8.7 1.3L1.3 8.7" stroke="#fff" stroke-width="1.4" fill="none"/></svg>
<div style="left:10px;top:444px;width:968px;height:32px;background:#f4f4f4;"></div>
<svg style="left:19px;top:454px;" width="14" height="14" viewBox="0 0 14 14"><path d="M5 0H9V5H14V9H9V14H5V9H0V5H5Z" fill="#7cc06a" opacity="0.6"/></svg>
<span class="t" style="left:43px;top:453.0px;font-size:11.5px;line-height:16px;color:#a9a9a9;letter-spacing:-0.141px;">Dodaj</span>
<div style="left:83px;top:454.5px;width:1px;height:13px;background:#c8c8c8;"></div>
<svg style="left:90.5px;top:459px;" width="6" height="4.0" viewBox="0 0 6 4.0"><path d="M0 0H6L3.0 3.6Z" fill="#a0a0a0"/></svg>
<svg style="left:111px;top:454.5px;" width="13" height="13" viewBox="0 0 13 13"><path d="M1.8 1.8L11.2 11.2M11.2 1.8L1.8 11.2" stroke="#dd4424" stroke-width="3.3" opacity="0.5"/></svg>
<span class="t" style="left:134px;top:453.0px;font-size:11.5px;line-height:16px;color:#a9a9a9;letter-spacing:-0.620px;">Usuń</span>
<svg style="left:175.5px;top:452.3px;" width="16" height="16" viewBox="0 0 16 16"><path d="M5 0H11V6H15L8 12.5L1 6H5Z" fill="#e5452c"/><rect x="0.5" y="13" width="15" height="2" fill="#8cc152"/><rect x="5" y="13" width="6" height="2" fill="#f4c842"/></svg>
<span class="t" style="left:196px;top:453.0px;font-size:11.5px;line-height:16px;color:#484848;letter-spacing:-0.254px;">Programowanie</span>
<div style="left:280px;top:454.5px;width:1px;height:13px;background:#c8c8c8;"></div>
<svg style="left:286.0px;top:459px;" width="6" height="4.0" viewBox="0 0 6 4.0"><path d="M0 0H6L3.0 3.6Z" fill="#555"/></svg>
<svg style="left:304px;top:453.5px;" width="15" height="15" viewBox="0 0 15 15"><circle cx="7.5" cy="7.5" r="7.2" fill="#4a8bcb"/><circle cx="7.5" cy="7.5" r="6" fill="#5b9ad6"/><rect x="6.4" y="6.2" width="2.2" height="5.6" fill="#fff"/><circle cx="7.5" cy="3.9" r="1.3" fill="#fff"/></svg>
<span class="t" style="left:324px;top:453.0px;font-size:11.5px;line-height:16px;color:#484848;letter-spacing:-0.188px;">Informacje</span>
<svg style="left:380.0px;top:459px;" width="6" height="4.0" viewBox="0 0 6 4.0"><path d="M0 0H6L3.0 3.6Z" fill="#555"/></svg>
<svg style="left:397px;top:452.5px;" width="17" height="16" viewBox="0 0 17 16"><path d="M5.6 3.4 C7.5 1.4 13.6 1 14.4 5.2 C15.1 9.2 14.8 13.2 8.6 13.1" fill="none" stroke="#e0a24e" stroke-width="2.9"/><path d="M0.8 6.2 H9.6 L5.2 13.2 Z" fill="#ec9a3c"/><path d="M2 14.6 H7.5" stroke="#cdbfa8" stroke-width="1"/></svg>
<span class="t" style="left:423px;top:453.0px;font-size:11.5px;line-height:16px;color:#484848;letter-spacing:-0.073px;">Uruchom ponownie</span>
<svg style="left:539px;top:453px;" width="11" height="16" viewBox="0 0 11 16"><path d="M4.5 0.8H9L6.3 6.3H10L3.5 15.2L5 8.8H1.5Z" fill="#f6f6f6" stroke="#c9c9c9" stroke-width="0.9"/></svg>
<span class="t" style="left:558px;top:453.0px;font-size:11.5px;line-height:16px;color:#484848;letter-spacing:-0.249px;">Rozprogramuj</span>
<svg style="left:632.5px;top:459px;" width="6" height="4.0" viewBox="0 0 6 4.0"><path d="M0 0H6L3.0 3.6Z" fill="#555"/></svg>
<svg style="left:650px;top:454px;" width="16.5" height="13.5" viewBox="0 0 22 18"><g opacity="0.5"><rect x="5" y="0.5" width="12" height="6" fill="#f8f8f8" stroke="#b4b4b4"/><rect x="0.5" y="6" width="21" height="8.5" rx="1.5" fill="#c2c2c2" stroke="#a4a4a4"/><rect x="4.5" y="10.5" width="13" height="7" fill="#fafafa" stroke="#adadad"/><path d="M6.5 13.5H15.5M6.5 15.5H15.5" stroke="#c4c4c4"/></g></svg>
<span class="t" style="left:675px;top:453.0px;font-size:11.5px;line-height:16px;color:#484848;letter-spacing:-0.247px;">Drukuj</span>
<svg style="left:771px;top:455px;" width="15" height="11" viewBox="0 0 15 11"><path d="M6 1L1.5 5.5L6 10M1.5 5.5H14.5" stroke="#4a7fc0" stroke-width="1.5" fill="none"/></svg>
<svg style="left:803px;top:455px;" width="15" height="11" viewBox="0 0 15 11"><path d="M9 1L13.5 5.5L9 10M13.5 5.5H0.5" stroke="#a9c4e4" stroke-width="1.5" fill="none"/></svg>
<div style="left:830px;top:450px;width:143px;height:21px;background:#fff;border:1px solid #e4e4e4;box-sizing:border-box;"></div>
<span class="t" style="left:835px;top:452.5px;font-size:11.5px;line-height:16px;color:#a0a0a0;letter-spacing:-0.806px;">Szukaj</span>
<svg style="left:952px;top:453px;" width="15" height="15" viewBox="0 0 15 15"><circle cx="9.3" cy="5.7" r="4.3" fill="none" stroke="#8e8e8e" stroke-width="1.3"/><path d="M6 9L1.2 13.8" stroke="#8e8e8e" stroke-width="1.9"/></svg>
<div style="left:10px;top:476px;width:278px;height:264px;background:#fff;"></div>
<div style="left:10px;top:476px;width:278px;height:23px;background:#e3e3e3;"></div>
<svg style="left:16.5px;top:482.3px;" width="15" height="11" viewBox="0 0 15 11"><path d="M1.2 2.3H13.8" stroke="#1b57aa" stroke-width="2.5" stroke-linecap="round"/><path d="M2.8 3V8.5M7.5 3V8.5M12.2 3V8.5" stroke="#1b57aa" stroke-width="1.1"/><circle cx="2.8" cy="8.9" r="1.6" fill="#1b57aa"/><circle cx="7.5" cy="8.9" r="1.6" fill="#1b57aa"/><circle cx="12.2" cy="8.9" r="1.6" fill="#1b57aa"/></svg>
<span class="t" style="left:37px;top:480.5px;font-size:11.5px;line-height:16px;color:#303030;letter-spacing:0.276px;-webkit-text-stroke:0.45px #303030;">Szkielet topologii</span>
<div style="left:288px;top:476px;width:13px;height:264px;background:#fff;"></div>
<div style="left:288px;top:476px;width:1px;height:264px;background:#ececec;"></div>
<div style="left:289px;top:492px;width:12px;height:101px;background:#e6e6e6;"></div>
<svg style="left:291px;top:481px;" width="9" height="7" viewBox="0 0 9 7"><path d="M1 5.5L4.5 2L8 5.5" stroke="#333" stroke-width="1.8" fill="none"/></svg>
<svg style="left:291px;top:730px;" width="9" height="7" viewBox="0 0 9 7"><path d="M1 1.5L4.5 5L8 1.5" stroke="#333" stroke-width="1.8" fill="none"/></svg>
<svg style="left:16.5px;top:505.5px;" width="6" height="9" viewBox="0 0 6 9"><path d="M0.8 0.8L4.8 4.5L0.8 8.2Z" fill="#fff" stroke="#c4c4c4" stroke-width="0.9"/></svg>
<svg style="left:29px;top:504px;" width="15" height="14" viewBox="0 0 15 14"><path d="M0.5 1.5H5.5L7 3H13.5V13H0.5Z" fill="#6e6e6e"/><path d="M2.2 4.5H14.7L13.2 13.5H0.5Z" fill="#f2bd6c" stroke="#d9a04a" stroke-width="0.6"/></svg>
<span class="t" style="left:48.5px;top:503.0px;font-size:11.5px;line-height:16px;color:#484848;letter-spacing:-0.054px;">Katalog dynamiczny</span>
<svg style="left:14.5px;top:530.5px;" width="7" height="7" viewBox="0 0 7 7"><path d="M6.5 0.5V6.5H0.5Z" fill="#3a3a3a"/></svg>
<svg style="left:28px;top:527px;" width="15" height="15" viewBox="0 0 15 15"><rect x="0.6" y="0.6" width="13.8" height="13.8" fill="#eaf0f9" stroke="#5b8ed4" stroke-width="1.2"/><path d="M7.5 0.5V5" stroke="#1a5fb8" stroke-width="1.3"/><rect x="5" y="5" width="5" height="5" fill="#1a62bd"/></svg>
<span class="t" style="left:49px;top:527.0px;font-size:11.5px;line-height:16px;color:#484848;letter-spacing:-0.297px;">1 IP obszar</span>
<svg style="left:20.5px;top:553.0px;" width="7" height="7" viewBox="0 0 7 7"><path d="M6.5 0.5V6.5H0.5Z" fill="#3a3a3a"/></svg>
<svg style="left:35px;top:550.5px;" width="13" height="14" viewBox="0 0 13 14"><path d="M2 0V14" stroke="#2e9b3a" stroke-width="2.6" fill="none"/><path d="M2 3.5H8M2 10.5H8" stroke="#2e9b3a" stroke-width="1.5" fill="none"/><circle cx="10" cy="3.5" r="2.6" fill="#2e9b3a"/><circle cx="10" cy="10.5" r="2.6" fill="#2e9b3a"/></svg>
<span class="t" style="left:55px;top:549.5px;font-size:11.5px;line-height:16px;color:#484848;letter-spacing:-0.375px;">1.1 TP linia</span>
<svg style="left:27.5px;top:576.5px;" width="7" height="7" viewBox="0 0 7 7"><path d="M6.5 0.5V6.5H0.5Z" fill="#3a3a3a"/></svg>
<svg style="left:42px;top:574.5px;" width="15" height="12" viewBox="0 0 15 12"><rect x="3.5" y="0.5" width="11" height="11" fill="#cfcfcf" stroke="#7d7d7d"/><path d="M0.5 6H3.5M1.2 4.5V7.5" stroke="#6f6f6f" stroke-width="1.3"/></svg>
<span class="t" style="left:62px;top:573.0px;font-size:11.5px;line-height:16px;color:#484848;letter-spacing:0.031px;width:226px;overflow:hidden;">1.1.1 Switching actuator, 24-gang / blind act.</span>
<div style="left:11px;top:592px;width:277px;height:23px;background:#e3e3e3;"></div>
<svg style="left:37.5px;top:598.5px;" width="6" height="9" viewBox="0 0 6 9"><path d="M0.8 0.8L4.8 4.5L0.8 8.2Z" fill="#fff" stroke="#cfcfcf" stroke-width="0.9"/></svg>
<svg style="left:50px;top:596px;" width="14" height="12.6" viewBox="0 0 14 12.6"><rect x="0" y="0" width="3.6" height="12.6" fill="#c9c9c9"/><rect x="5" y="0" width="3.6" height="12.6" fill="#c9c9c9"/><rect x="10" y="0" width="3.6" height="12.6" fill="#c9c9c9"/><path d="M0 0.5H14M0 12.1H14" stroke="#b0b0b0" stroke-dasharray="3.6 1.4"/></svg>
<span class="t" style="left:70px;top:596.0px;font-size:11.5px;line-height:16px;color:#484848;letter-spacing:-0.190px;">Relay output 1 (...)</span>
<svg style="left:37.5px;top:622.5px;" width="6" height="9" viewBox="0 0 6 9"><path d="M0.8 0.8L4.8 4.5L0.8 8.2Z" fill="#fff" stroke="#cfcfcf" stroke-width="0.9"/></svg>
<svg style="left:50px;top:620px;" width="14" height="12.6" viewBox="0 0 14 12.6"><rect x="0" y="0" width="3.6" height="12.6" fill="#c9c9c9"/><rect x="5" y="0" width="3.6" height="12.6" fill="#c9c9c9"/><rect x="10" y="0" width="3.6" height="12.6" fill="#c9c9c9"/><path d="M0 0.5H14M0 12.1H14" stroke="#b0b0b0" stroke-dasharray="3.6 1.4"/></svg>
<span class="t" style="left:70px;top:620.0px;font-size:11.5px;line-height:16px;color:#484848;letter-spacing:-0.190px;">Relay output 2 (...)</span>
<svg style="left:37.5px;top:645.5px;" width="6" height="9" viewBox="0 0 6 9"><path d="M0.8 0.8L4.8 4.5L0.8 8.2Z" fill="#fff" stroke="#cfcfcf" stroke-width="0.9"/></svg>
<svg style="left:50px;top:643px;" width="14" height="12.6" viewBox="0 0 14 12.6"><rect x="0" y="0" width="3.6" height="12.6" fill="#c9c9c9"/><rect x="5" y="0" width="3.6" height="12.6" fill="#c9c9c9"/><rect x="10" y="0" width="3.6" height="12.6" fill="#c9c9c9"/><path d="M0 0.5H14M0 12.1H14" stroke="#b0b0b0" stroke-dasharray="3.6 1.4"/></svg>
<span class="t" style="left:70px;top:643.0px;font-size:11.5px;line-height:16px;color:#484848;letter-spacing:-0.190px;">Relay output 3 (...)</span>
<svg style="left:37.5px;top:668.5px;" width="6" height="9" viewBox="0 0 6 9"><path d="M0.8 0.8L4.8 4.5L0.8 8.2Z" fill="#fff" stroke="#cfcfcf" stroke-width="0.9"/></svg>
<svg style="left:50px;top:666px;" width="14" height="12.6" viewBox="0 0 14 12.6"><rect x="0" y="0" width="3.6" height="12.6" fill="#c9c9c9"/><rect x="5" y="0" width="3.6" height="12.6" fill="#c9c9c9"/><rect x="10" y="0" width="3.6" height="12.6" fill="#c9c9c9"/><path d="M0 0.5H14M0 12.1H14" stroke="#b0b0b0" stroke-dasharray="3.6 1.4"/></svg>
<span class="t" style="left:70px;top:666.0px;font-size:11.5px;line-height:16px;color:#484848;letter-spacing:-0.190px;">Relay output 4 (...)</span>
<svg style="left:37.5px;top:691.5px;" width="6" height="9" viewBox="0 0 6 9"><path d="M0.8 0.8L4.8 4.5L0.8 8.2Z" fill="#fff" stroke="#cfcfcf" stroke-width="0.9"/></svg>
<svg style="left:50px;top:689px;" width="14" height="12.6" viewBox="0 0 14 12.6"><rect x="0" y="0" width="3.6" height="12.6" fill="#c9c9c9"/><rect x="5" y="0" width="3.6" height="12.6" fill="#c9c9c9"/><rect x="10" y="0" width="3.6" height="12.6" fill="#c9c9c9"/><path d="M0 0.5H14M0 12.1H14" stroke="#b0b0b0" stroke-dasharray="3.6 1.4"/></svg>
<span class="t" style="left:70px;top:689.0px;font-size:11.5px;line-height:16px;color:#484848;letter-spacing:-0.161px;">Relay outputs 5 + 6 (...)</span>
<svg style="left:37.5px;top:714.5px;" width="6" height="9" viewBox="0 0 6 9"><path d="M0.8 0.8L4.8 4.5L0.8 8.2Z" fill="#fff" stroke="#cfcfcf" stroke-width="0.9"/></svg>
<svg style="left:50px;top:712px;" width="14" height="12.6" viewBox="0 0 14 12.6"><rect x="0" y="0" width="3.6" height="12.6" fill="#c9c9c9"/><rect x="5" y="0" width="3.6" height="12.6" fill="#c9c9c9"/><rect x="10" y="0" width="3.6" height="12.6" fill="#c9c9c9"/><path d="M0 0.5H14M0 12.1H14" stroke="#b0b0b0" stroke-dasharray="3.6 1.4"/></svg>
<span class="t" style="left:70px;top:712.0px;font-size:11.5px;line-height:16px;color:#484848;letter-spacing:-0.161px;">Relay outputs 7 + 8 (...)</span>
<svg style="left:37.5px;top:737.5px;" width="6" height="9" viewBox="0 0 6 9"><path d="M0.8 0.8L4.8 4.5L0.8 8.2Z" fill="#fff" stroke="#cfcfcf" stroke-width="0.9"/></svg>
<svg style="left:50px;top:735px;" width="14" height="12.6" viewBox="0 0 14 12.6"><rect x="0" y="0" width="3.6" height="12.6" fill="#c9c9c9"/><rect x="5" y="0" width="3.6" height="12.6" fill="#c9c9c9"/><rect x="10" y="0" width="3.6" height="12.6" fill="#c9c9c9"/><path d="M0 0.5H14M0 12.1H14" stroke="#b0b0b0" stroke-dasharray="3.6 1.4"/></svg>
<span class="t" style="left:70px;top:735.0px;font-size:11.5px;line-height:16px;color:#484848;letter-spacing:-0.130px;">Relay outputs 9 + 10 (...)</span>
<div style="left:9px;top:741px;width:970px;height:2px;background:#f7f7f7;"></div>
<div style="left:301px;top:476px;width:2px;height:265px;background:#e0e0e0;"></div>
<div style="left:303px;top:476px;width:675px;height:229px;background:#fff;"></div>
<div style="left:304px;top:499px;width:674px;height:1px;background:#e4e4e4;"></div>
<div style="left:322px;top:476px;width:1px;height:23px;background:#e4e4e4;"></div>
<div style="left:380px;top:476px;width:1px;height:23px;background:#e4e4e4;"></div>
<div style="left:538px;top:476px;width:1px;height:23px;background:#e4e4e4;"></div>
<div style="left:654px;top:476px;width:1px;height:23px;background:#e4e4e4;"></div>
<div style="left:750px;top:476px;width:1px;height:23px;background:#e4e4e4;"></div>
<div style="left:828px;top:476px;width:1px;height:23px;background:#e4e4e4;"></div>
<div style="left:872px;top:476px;width:1px;height:23px;background:#e4e4e4;"></div>
<div style="left:891px;top:476px;width:1px;height:23px;background:#e4e4e4;"></div>
<div style="left:910px;top:476px;width:1px;height:23px;background:#e4e4e4;"></div>
<div style="left:930px;top:476px;width:1px;height:23px;background:#e4e4e4;"></div>
<div style="left:949px;top:476px;width:1px;height:23px;background:#e4e4e4;"></div>
<div style="left:968px;top:476px;width:1px;height:23px;background:#e4e4e4;"></div>
<span class="t" style="left:328px;top:480.5px;font-size:11.5px;line-height:16px;color:#303030;letter-spacing:0.621px;-webkit-text-stroke:0.45px #303030;">Numer</span>
<svg style="left:369px;top:485px;" width="7" height="5" viewBox="0 0 7 5"><path d="M0 5H7L3.5 0.5Z" fill="#333"/></svg>
<span class="t" style="left:385px;top:480.5px;font-size:11.5px;line-height:16px;color:#303030;letter-spacing:0.461px;-webkit-text-stroke:0.45px #303030;">Nazwa</span>
<span class="t" style="left:544.5px;top:480.5px;font-size:11.5px;line-height:16px;color:#303030;letter-spacing:0.104px;-webkit-text-stroke:0.45px #303030;">Funkcja obiektu</span>
<span class="t" style="left:660px;top:480.5px;font-size:11.5px;line-height:16px;color:#303030;letter-spacing:0.115px;-webkit-text-stroke:0.45px #303030;">Opis</span>
<span class="t" style="left:756.5px;top:480.5px;font-size:11.5px;line-height:16px;color:#303030;letter-spacing:0.190px;-webkit-text-stroke:0.45px #303030;width:71px;overflow:hidden;">Adres grupowy</span>
<span class="t" style="left:833px;top:480.5px;font-size:11.5px;line-height:16px;color:#303030;letter-spacing:0.240px;-webkit-text-stroke:0.45px #303030;width:38px;overflow:hidden;">Długość</span>
<span class="t" style="left:878px;top:480.5px;font-size:11.5px;line-height:16px;color:#303030;-webkit-text-stroke:0.45px #303030;">C</span>
<span class="t" style="left:897px;top:480.5px;font-size:11.5px;line-height:16px;color:#303030;-webkit-text-stroke:0.45px #303030;">R</span>
<span class="t" style="left:915px;top:480.5px;font-size:11.5px;line-height:16px;color:#303030;-webkit-text-stroke:0.45px #303030;">W</span>
<span class="t" style="left:936px;top:480.5px;font-size:11.5px;line-height:16px;color:#303030;-webkit-text-stroke:0.45px #303030;">T</span>
<span class="t" style="left:954px;top:480.5px;font-size:11.5px;line-height:16px;color:#303030;-webkit-text-stroke:0.45px #303030;">U</span>
<span class="t" style="left:973px;top:480.5px;font-size:11.5px;line-height:16px;color:#303030;-webkit-text-stroke:0.45px #303030;width:5px;overflow:hidden;">T</span>
<div style="left:321px;top:519px;width:657px;height:19px;background:#f1f4f8;"></div>
<svg style="left:304.5px;top:503.4px;" width="16" height="12" viewBox="0 0 16 12"><rect x="1.2" y="0.4" width="5.6" height="11.2" fill="#f1b455" stroke="#e3a040" stroke-width="0.8"/><path d="M7 2.8H11.5" stroke="#e9a648" stroke-width="1.3"/><path d="M7 9.6H11.5" stroke="#6f9fd8" stroke-width="1.3"/><rect x="11.4" y="0.5" width="3.2" height="11" fill="#a9c8ec" stroke="#7aa5da" stroke-width="0.8"/></svg>
<span class="t" style="left:323px;top:502.0px;font-size:11.5px;line-height:16px;color:#484848;letter-spacing:-0.594px;">322</span>
<span class="t" style="left:380px;top:502.0px;font-size:11.5px;line-height:16px;color:#484848;letter-spacing:-0.290px;">Switching 1  (...) - Input</span>
<span class="t" style="left:539.5px;top:502.0px;font-size:11.5px;line-height:16px;color:#484848;letter-spacing:-0.277px;">Switching</span>
<span class="t" style="left:658px;top:502.0px;font-size:11.5px;line-height:16px;color:#484848;letter-spacing:-0.384px;">ETS u swojego o...</span>
<span class="t" style="left:751px;top:500.0px;font-size:11px;line-height:16px;color:#484848;letter-spacing:0.383px;">0/0/1</span>
<span class="t" style="left:828.5px;top:502.0px;font-size:11.5px;line-height:16px;color:#484848;letter-spacing:0.062px;">1 bit</span>
<span class="t" style="left:873px;top:502.0px;font-size:12.5px;line-height:16px;color:#666;">C</span>
<span class="t" style="left:892px;top:502.0px;font-size:12.5px;line-height:16px;color:#666;">-</span>
<span class="t" style="left:911px;top:502.0px;font-size:12.5px;line-height:16px;color:#666;">W</span>
<span class="t" style="left:931px;top:502.0px;font-size:12.5px;line-height:16px;color:#666;">-</span>
<span class="t" style="left:949px;top:502.0px;font-size:12.5px;line-height:16px;color:#666;">U</span>
<span class="t" style="left:968px;top:502.0px;font-size:11.5px;line-height:16px;color:#484848;letter-spacing:-0.391px;width:10px;overflow:hidden;">switch</span>
<svg style="left:304.5px;top:522.4px;" width="16" height="12" viewBox="0 0 16 12"><rect x="1.2" y="0.4" width="5.6" height="11.2" fill="#f1b455" stroke="#e3a040" stroke-width="0.8"/><path d="M7 2.8H11.5" stroke="#e9a648" stroke-width="1.3"/><path d="M7 9.6H11.5" stroke="#6f9fd8" stroke-width="1.3"/><rect x="11.4" y="0.5" width="3.2" height="11" fill="#a9c8ec" stroke="#7aa5da" stroke-width="0.8"/></svg>
<span class="t" style="left:323px;top:521.0px;font-size:11.5px;line-height:16px;color:#484848;letter-spacing:-0.594px;">323</span>
<span class="t" style="left:380px;top:521.0px;font-size:11.5px;line-height:16px;color:#484848;letter-spacing:-0.276px;">Switching 1  (...) - Output</span>
<span class="t" style="left:539.5px;top:521.0px;font-size:11.5px;line-height:16px;color:#484848;letter-spacing:-0.241px;">Switching feedback</span>
<span class="t" style="left:828.5px;top:521.0px;font-size:11.5px;line-height:16px;color:#484848;letter-spacing:0.062px;">1 bit</span>
<span class="t" style="left:873px;top:521.0px;font-size:12.5px;line-height:16px;color:#666;">C</span>
<span class="t" style="left:892px;top:521.0px;font-size:12.5px;line-height:16px;color:#666;">R</span>
<span class="t" style="left:911px;top:521.0px;font-size:12.5px;line-height:16px;color:#666;">-</span>
<span class="t" style="left:931px;top:521.0px;font-size:12.5px;line-height:16px;color:#666;">T</span>
<span class="t" style="left:949px;top:521.0px;font-size:12.5px;line-height:16px;color:#666;">U</span>
<span class="t" style="left:968px;top:521.0px;font-size:11.5px;line-height:16px;color:#484848;letter-spacing:-0.391px;width:10px;overflow:hidden;">switch</span>
<div style="left:303px;top:705px;width:675px;height:14px;background:#fff;"></div>
<div style="left:303px;top:705px;width:675px;height:1px;background:#e4e4e4;"></div>
<div style="left:318px;top:706px;width:559px;height:13px;background:#e2e2e2;"></div>
<svg style="left:307px;top:709px;" width="7" height="7" viewBox="0 0 7 7"><path d="M5 0.6L1.8 3.5L5 6.4" stroke="#3a3a3a" stroke-width="1.9" fill="none"/></svg>
<svg style="left:966px;top:709px;" width="7" height="7" viewBox="0 0 7 7"><path d="M2 0.6L5.2 3.5L2 6.4" stroke="#3a3a3a" stroke-width="1.9" fill="none"/></svg>
<svg style="left:303px;top:719px" width="119" height="21" viewBox="0 0 119 21"><path d="M0 0H117L107 21H0Z" fill="#fff"/><path d="M117 0L107 21" stroke="#dedede" fill="none"/></svg>
<svg style="left:410px;top:719px" width="97" height="21" viewBox="0 0 97 21"><path d="M95 0L85 20.5H-6" stroke="#dedede" fill="none"/></svg>
<span class="t" style="left:314px;top:722.5px;font-size:11.5px;line-height:16px;color:#484848;letter-spacing:-0.093px;">Obiekty grupowe</span>
<span class="t" style="left:432px;top:722.5px;font-size:11.5px;line-height:16px;color:#484848;letter-spacing:-0.256px;">Parametry</span>
<div style="left:10px;top:740px;width:410px;height:1px;background:#dedede;"></div>
<div style="left:9px;top:743px;width:1006px;height:24px;background:#f0f0f0;"></div>
<div style="left:9px;top:743px;width:1006px;height:1px;background:#d2d2d2;"></div>
<span class="t" style="left:13.5px;top:751.0px;font-size:9px;line-height:12px;color:#444;letter-spacing:-0.246px;">1.1 TP linia</span>
<span class="t" style="left:333px;top:751.0px;font-size:9px;line-height:12px;color:#444;letter-spacing:0.086px;">0/0/1  ETS u swojego opiekuna</span>
<div style="left:327px;top:749px;width:1px;height:14px;background:#dcdcdc;"></div>
<div style="left:645px;top:749px;width:1px;height:14px;background:#dcdcdc;"></div>
<div style="left:966px;top:749px;width:1px;height:14px;background:#dcdcdc;"></div>
</div></body></html>
